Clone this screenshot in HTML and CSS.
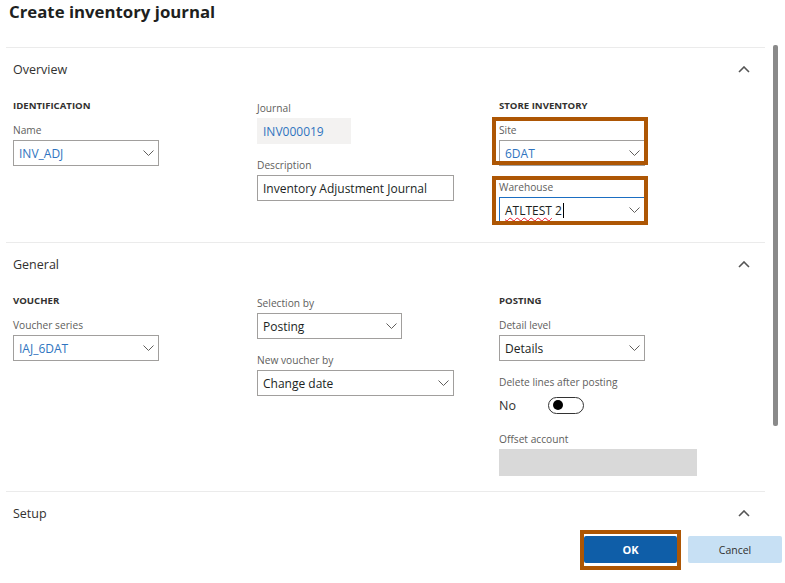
FILE: index.html
```html
<!DOCTYPE html>
<html lang="en">
<head>
<meta charset="utf-8">
<title>Create inventory journal</title>
<link rel="stylesheet" href="styles.css">
</head>
<body>
<div class="dialog">
  <h1 class="title">Create inventory journal</h1>
  <div class="scroller">
    <div class="content">
      <section class="fasttab overview">
        <div class="tab-header">
          <span>Overview</span>
          <svg class="collapse" width="12" height="7" viewBox="0 0 12 7"><path d="M1 6 L6 1 L11 6" fill="none" stroke="#555" stroke-width="1.6"/></svg>
        </div>
        <div class="tab-grid">
          <div class="col">
            <div class="caption">IDENTIFICATION</div>
            <div class="field">
              <div class="label">Name</div>
              <div class="input w146"><span class="val link">INV_ADJ</span><svg class="chev" width="11" height="6" viewBox="0 0 11 6"><path d="M0.5 0.5 L5.5 5.5 L10.5 0.5" fill="none" stroke="#605e5c" stroke-width="1"/></svg></div>
            </div>
          </div>
          <div class="col">
            <div class="field">
              <div class="label">Journal</div>
              <div class="input readonly w94"><span class="val link">INV000019</span></div>
            </div>
            <div class="field">
              <div class="label">Description</div>
              <div class="input w197"><span class="val">Inventory Adjustment Journal</span></div>
            </div>
          </div>
          <div class="col">
            <div class="caption">STORE INVENTORY</div>
            <div class="field">
              <div class="label">Site</div>
              <div class="input w146"><span class="val link">6DAT</span><svg class="chev" width="11" height="6" viewBox="0 0 11 6"><path d="M0.5 0.5 L5.5 5.5 L10.5 0.5" fill="none" stroke="#605e5c" stroke-width="1"/></svg></div>
              <div class="highlight hl-site"></div>
            </div>
            <div class="field">
              <div class="label">Warehouse</div>
              <div class="input focused w146"><span class="val"><span class="misspelled">ATLTEST</span> 2<span class="caret"></span></span><svg class="chev" width="11" height="6" viewBox="0 0 11 6"><path d="M0.5 0.5 L5.5 5.5 L10.5 0.5" fill="none" stroke="#605e5c" stroke-width="1"/></svg></div>
              <div class="highlight hl-warehouse"></div>
            </div>
          </div>
        </div>
      </section>

      <section class="fasttab general">
        <div class="tab-header">
          <span>General</span>
          <svg class="collapse" width="12" height="7" viewBox="0 0 12 7"><path d="M1 6 L6 1 L11 6" fill="none" stroke="#555" stroke-width="1.6"/></svg>
        </div>
        <div class="tab-grid">
          <div class="col">
            <div class="caption">VOUCHER</div>
            <div class="field">
              <div class="label">Voucher series</div>
              <div class="input w146"><span class="val link">IAJ_6DAT</span><svg class="chev" width="11" height="6" viewBox="0 0 11 6"><path d="M0.5 0.5 L5.5 5.5 L10.5 0.5" fill="none" stroke="#605e5c" stroke-width="1"/></svg></div>
            </div>
          </div>
          <div class="col">
            <div class="field">
              <div class="label">Selection by</div>
              <div class="input w145"><span class="val">Posting</span><svg class="chev" width="11" height="6" viewBox="0 0 11 6"><path d="M0.5 0.5 L5.5 5.5 L10.5 0.5" fill="none" stroke="#605e5c" stroke-width="1"/></svg></div>
            </div>
            <div class="field">
              <div class="label">New voucher by</div>
              <div class="input w197"><span class="val">Change date</span><svg class="chev" width="11" height="6" viewBox="0 0 11 6"><path d="M0.5 0.5 L5.5 5.5 L10.5 0.5" fill="none" stroke="#605e5c" stroke-width="1"/></svg></div>
            </div>
          </div>
          <div class="col">
            <div class="caption">POSTING</div>
            <div class="field">
              <div class="label">Detail level</div>
              <div class="input w146"><span class="val">Details</span><svg class="chev" width="11" height="6" viewBox="0 0 11 6"><path d="M0.5 0.5 L5.5 5.5 L10.5 0.5" fill="none" stroke="#605e5c" stroke-width="1"/></svg></div>
            </div>
            <div class="field">
              <div class="label">Delete lines after posting</div>
              <div class="toggle-row">
                <span class="toggle-text">No</span>
                <span class="toggle"><span class="knob"></span></span>
              </div>
            </div>
            <div class="field">
              <div class="label">Offset account</div>
              <div class="input disabled w198"></div>
            </div>
          </div>
        </div>
      </section>

      <section class="fasttab setup">
        <div class="tab-header">
          <span>Setup</span>
          <svg class="collapse" width="12" height="7" viewBox="0 0 12 7"><path d="M1 6 L6 1 L11 6" fill="none" stroke="#555" stroke-width="1.6"/></svg>
        </div>
      </section>
    </div>
    <div class="scrollbar"><div class="thumb"></div></div>
  </div>
  <div class="footer">
    <div class="btn-wrap">
      <button class="btn primary">OK</button>
      <div class="highlight hl-ok"></div>
    </div>
    <button class="btn secondary">Cancel</button>
  </div>
</div>
</body>
</html>
```

FILE: styles.css
```css
* { box-sizing: border-box; }

html, body {
  margin: 0;
  padding: 0;
  background: #ffffff;
}

body {
  width: 785px;
  height: 583px;
  overflow: hidden;
  font-family: "Open Sans", "Noto Sans", "Liberation Sans", sans-serif;
  color: #323130;
}

.dialog {
  width: 785px;
  height: 583px;
  display: flex;
  flex-direction: column;
}

.title {
  margin: 0;
  height: 45px;
  padding: 0 0 0 9px;
  font-size: 16.8px;
  line-height: 24px;
  font-weight: 700;
  color: #201f1e;
  flex: none;
}

.scroller {
  height: 485px;
  display: flex;
  overflow: hidden;
  flex: none;
}

.content {
  width: 759px;
  margin-left: 6px;
  padding-top: 2px;
  flex: none;
}

.scrollbar {
  margin-left: 8px;
  width: 5px;
}

.thumb {
  width: 5px;
  height: 381px;
  background: #8a8a8a;
  border-radius: 2px;
}

.fasttab {
  border-top: 1px solid #ebebeb;
}

.overview { padding-bottom: 8px; }
.general { padding-bottom: 4px; }

.tab-header {
  height: 43px;
  display: flex;
  align-items: center;
  justify-content: space-between;
  padding: 0 15px 0 7px;
  font-size: 12.5px;
  color: #323130;
}

.tab-grid {
  display: grid;
  grid-template-columns: 244px 242px 1fr;
  padding-left: 7px;
  margin-top: 7px;
}

.col {
  display: flex;
  flex-direction: column;
}

.caption {
  font-size: 9.6px;
  font-weight: 700;
  line-height: 16px;
  height: 16px;
  margin-bottom: 6px;
  color: #323130;
}

.field {
  position: relative;
  margin-bottom: 11px;
}

.label {
  font-size: 10.2px;
  line-height: 20px;
  height: 20px;
  color: #605e5c;
}

.input {
  height: 26px;
  border: 1px solid #a19f9d;
  background: #fff;
  display: flex;
  align-items: center;
  justify-content: space-between;
  padding: 0 4px 0 5px;
  font-size: 12px;
  color: #201f1e;
}

.val { white-space: nowrap; }
.link { color: #2f74c0; }

.readonly {
  border-color: transparent;
  background: #f3f2f1;
}

.disabled {
  border-color: transparent;
  background: #d9d9d9;
  height: 27px;
}

.focused {
  border-color: #1b6ec2;
}

.misspelled {
  text-decoration: underline wavy #e81123;
  text-decoration-thickness: 1px;
  text-underline-offset: 2px;
}

.caret {
  display: inline-block;
  width: 1px;
  height: 15px;
  background: #000;
  vertical-align: -3px;
  margin-left: 1px;
}

.chev { flex: none; }

.w94 { width: 94px; }
.w145 { width: 145px; }
.w146 { width: 146px; }
.w197 { width: 197px; }
.w198 { width: 198px; }

.toggle-row {
  height: 26px;
  display: flex;
  align-items: center;
  font-size: 12.5px;
  color: #323130;
}

.toggle-text {
  width: 49px;
}

.toggle {
  width: 36px;
  height: 17px;
  border: 1px solid #333;
  border-radius: 9px;
  display: flex;
  align-items: center;
  padding-left: 4px;
}

.knob {
  width: 10px;
  height: 10px;
  border-radius: 50%;
  background: #000;
}

.highlight {
  position: absolute;
  border: 4px solid #ad5604;
  pointer-events: none;
}

.hl-site {
  left: -7px;
  top: -3px;
  width: 156px;
  height: 48px;
}

.hl-warehouse {
  left: -7px;
  top: -1px;
  width: 156px;
  height: 49px;
}

.footer {
  flex: 1;
  display: flex;
  justify-content: flex-end;
  align-items: flex-start;
  padding: 6px 3px 0 0;
  gap: 11px;
}

.btn-wrap {
  position: relative;
}

.btn {
  height: 27px;
  border: none;
  border-radius: 2px;
  font-family: "Open Sans", "Noto Sans", "Liberation Sans", sans-serif;
  font-size: 10.5px;
  padding: 0;
  display: block;
}

.primary {
  width: 93px;
  background: #0f5ea8;
  color: #fff;
  font-weight: 700;
  font-size: 11px;
}

.secondary {
  width: 94px;
  background: #c7e0f4;
  color: #323130;
}

.hl-ok {
  left: -4px;
  top: -6px;
  width: 101px;
  height: 40px;
}
```
